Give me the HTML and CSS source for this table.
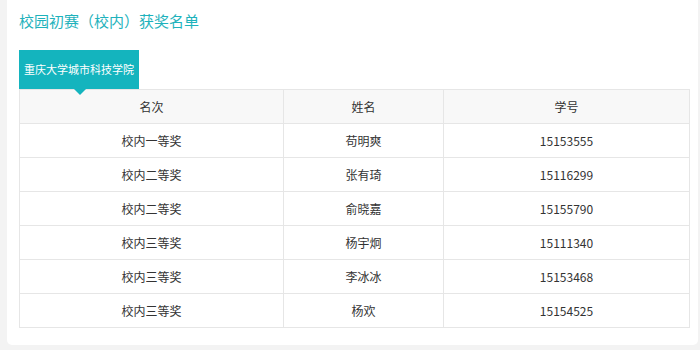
FILE: index.html
```html
<!DOCTYPE html>
<html lang="zh-CN">
<head>
<meta charset="utf-8">
<title>校园初赛（校内）获奖名单</title>
<link rel="stylesheet" href="styles.css">
</head>
<body>
<div class="card">
  <h1 class="title">校园初赛（校内）获奖名单</h1>
  <div class="tabs">
    <div class="tab">重庆大学城市科技学院</div>
  </div>
  <table class="list">
    <colgroup>
      <col class="c1"><col class="c2"><col class="c3">
    </colgroup>
    <thead>
      <tr><th>名次</th><th>姓名</th><th>学号</th></tr>
    </thead>
    <tbody>
      <tr><td>校内一等奖</td><td>苟明爽</td><td>15153555</td></tr>
      <tr><td>校内二等奖</td><td>张有琦</td><td>15116299</td></tr>
      <tr><td>校内二等奖</td><td>俞晓嘉</td><td>15155790</td></tr>
      <tr><td>校内三等奖</td><td>杨宇炯</td><td>15111340</td></tr>
      <tr><td>校内三等奖</td><td>李冰冰</td><td>15153468</td></tr>
      <tr><td>校内三等奖</td><td>杨欢</td><td>15154525</td></tr>
    </tbody>
  </table>
</div>
</body>
</html>
```
FILE: styles.css
```css
html, body {
  margin: 0;
  padding: 0;
  background: #f3f3f3;
}
body {
  font-family: "Noto Sans CJK SC", "Noto Sans", sans-serif;
  color: #333;
}
.card {
  margin-left: 7px;
  width: 691px;
  height: 345px;
  box-sizing: border-box;
  background: #fff;
  border-radius: 0 0 5px 5px;
  padding: 0 10px 0 12px;
}
.title {
  margin: 0;
  padding-top: 10px;
  height: 40px;
  box-sizing: border-box;
  font-size: 15px;
  line-height: 22px;
  font-weight: normal;
  color: #1eb2bc;
}
.tabs {
  display: flex;
}
.tab {
  position: relative;
  width: 120px;
  height: 39px;
  margin-top: 10px;
  background: #14b4be;
  color: #fff;
  font-size: 11px;
  line-height: 39px;
  text-align: center;
}
.tab::after {
  content: "";
  position: absolute;
  left: 55px;
  top: 39px;
  border-left: 6px solid transparent;
  border-right: 6px solid transparent;
  border-top: 6px solid #14b4be;
}
.list {
  width: 670px;
  border-collapse: collapse;
  table-layout: fixed;
  font-size: 12px;
}
.c1 { width: 264px; }
.c2 { width: 160px; }
.c3 { width: 246px; }
.list th, .list td {
  border: 1px solid #e6e6e6;
  height: 33px;
  padding: 0;
  text-align: center;
  font-weight: normal;
  color: #333;
}
.list th {
  background: #f8f8f8;
}
```
